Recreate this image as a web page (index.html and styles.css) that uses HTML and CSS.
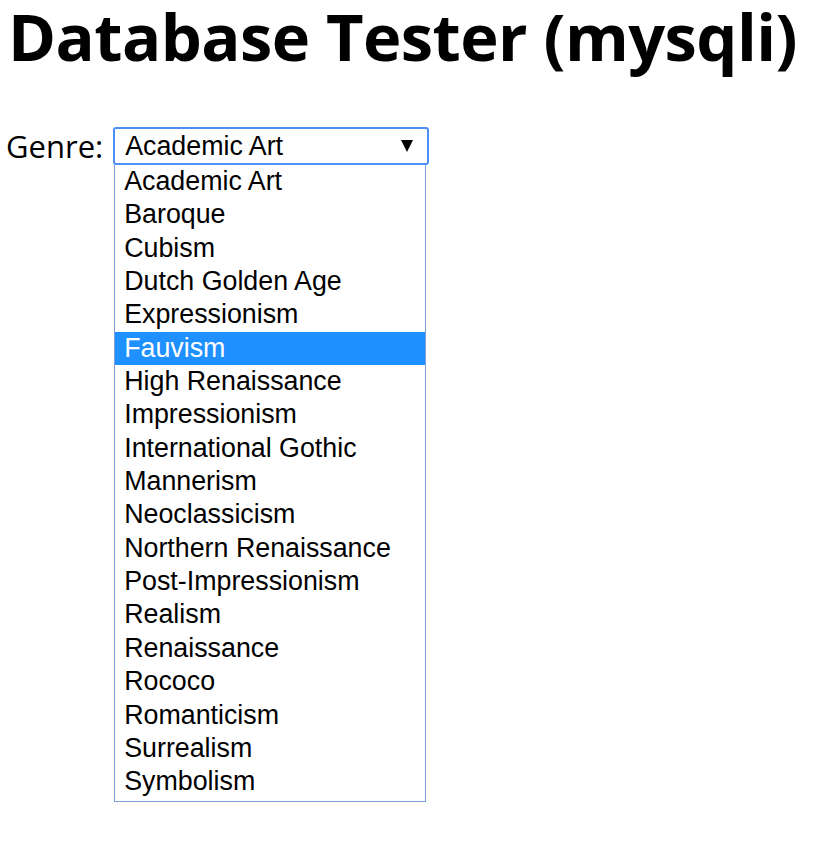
FILE: index.html
```html
<!DOCTYPE html>
<html>
<head>
<meta charset="utf-8">
<link rel="stylesheet" href="styles.css">
</head>
<body>
<h1 class="title">Database Tester (mysqli)</h1>
<div class="row">
  <span class="label">Genre:</span>
  <div class="picker">
    <div class="picker-box">
      <span class="picker-value">Academic Art</span>
      <span class="arrow"></span>
    </div>
    <div class="genre-list">
      <div class="genre-item">Academic Art</div>
      <div class="genre-item">Baroque</div>
      <div class="genre-item">Cubism</div>
      <div class="genre-item">Dutch Golden Age</div>
      <div class="genre-item">Expressionism</div>
      <div class="genre-item is-active">Fauvism</div>
      <div class="genre-item">High Renaissance</div>
      <div class="genre-item">Impressionism</div>
      <div class="genre-item">International Gothic</div>
      <div class="genre-item">Mannerism</div>
      <div class="genre-item">Neoclassicism</div>
      <div class="genre-item">Northern Renaissance</div>
      <div class="genre-item">Post-Impressionism</div>
      <div class="genre-item">Realism</div>
      <div class="genre-item">Renaissance</div>
      <div class="genre-item">Rococo</div>
      <div class="genre-item">Romanticism</div>
      <div class="genre-item">Surrealism</div>
      <div class="genre-item">Symbolism</div>
    </div>
  </div>
</div>
</body>
</html>
```
FILE: styles.css
```css
html, body {
  margin: 0;
  padding: 0;
  background: #ffffff;
  color: #000000;
}
body {
  padding: 0 8px;
}
.title {
  margin: 0;
  font-family: "Open Sans", "Noto Sans", sans-serif;
  font-weight: 700;
  font-size: 65px;
  line-height: 72px;
  letter-spacing: -0.55px;
}
.row {
  margin-top: 55px;
  display: flex;
  align-items: flex-start;
  gap: 10px;
}
.label {
  margin-left: -2px;
  font-family: "Open Sans", "Noto Sans", sans-serif;
  font-size: 31px;
  line-height: 38px;
}
.picker {
  display: flex;
  flex-direction: column;
  width: 316px;
}
.picker-box {
  box-sizing: border-box;
  width: 316px;
  height: 38px;
  border: 2px solid #4d8ff5;
  border-radius: 3px;
  display: flex;
  align-items: center;
  justify-content: space-between;
  padding: 0 14px 0 10px;
  font-family: "Liberation Sans", Arial, sans-serif;
  font-size: 26.8px;
}
.arrow {
  width: 0;
  height: 0;
  border-left: 6px solid transparent;
  border-right: 6px solid transparent;
  border-top: 12px solid #000;
}
.genre-list {
  margin-left: 1px;
  width: 312px;
  box-sizing: border-box;
  padding: 0 0 2px 0;
  border: 1px solid #7f9dd6;
  border-top: none;
  background: #fff;
  font-family: "Liberation Sans", Arial, sans-serif;
  font-size: 26.8px;
}
.genre-item {
  height: 33.35px;
  line-height: 33.35px;
  padding-left: 9px;
  white-space: nowrap;
}
.genre-item.is-active {
  background: #1e90ff;
  color: #fff;
}
```
